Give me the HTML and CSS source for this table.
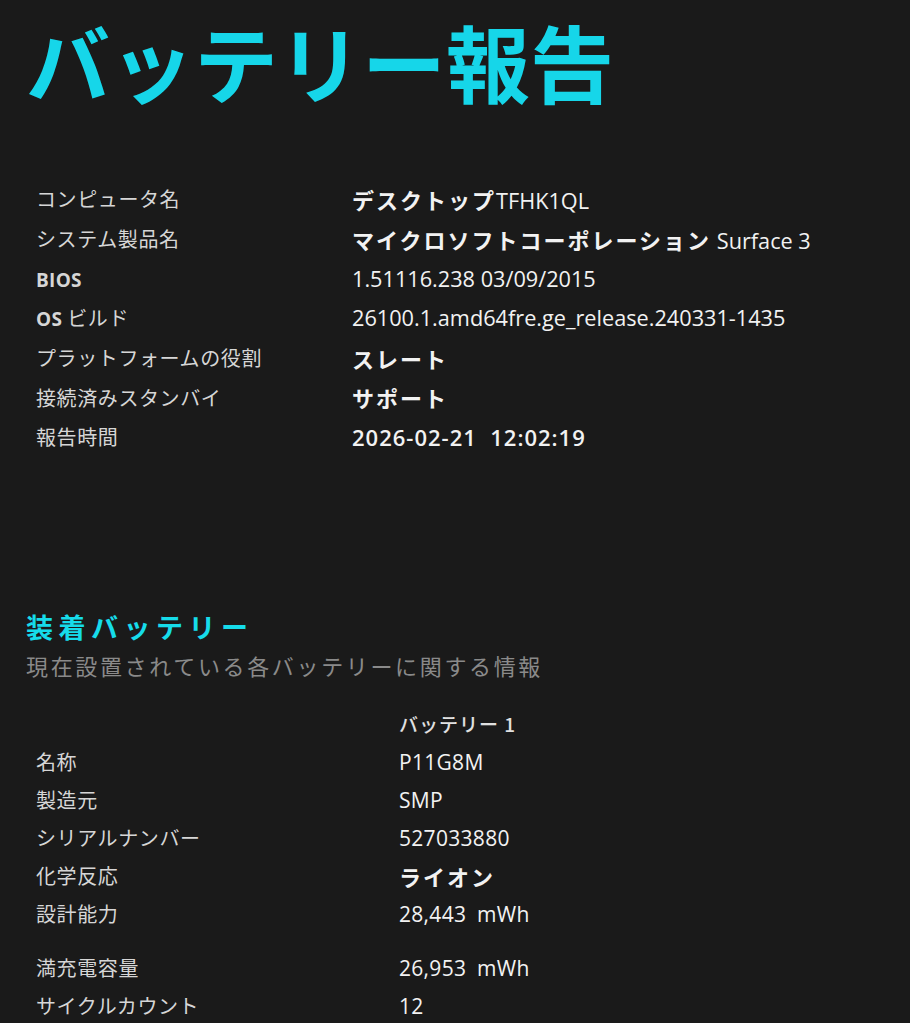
FILE: index.html
```html
<!DOCTYPE html>
<html lang="ja">
<head>
<meta charset="utf-8">
<title>バッテリー報告</title>
<link rel="stylesheet" href="styles.css">
</head>
<body>
<main class="page">
  <h1 class="title">バッテリー報告</h1>

  <table class="info">
    <tr><td class="label">コンピュータ名</td><td class="value"><span class="kana-strong">デスクトップ</span>TFHK1QL</td></tr>
    <tr><td class="label">システム製品名</td><td class="value"><span class="kana-strong">マイクロソフトコーポレーション</span> Surface 3</td></tr>
    <tr><td class="label"><span class="latin-bold">BIOS</span></td><td class="value">1.51116.238 03/09/2015</td></tr>
    <tr><td class="label"><span class="latin-bold">OS</span> ビルド</td><td class="value">26100.1.amd64fre.ge_release.240331-1435</td></tr>
    <tr><td class="label">プラットフォームの役割</td><td class="value"><span class="kana-strong">スレート</span></td></tr>
    <tr><td class="label">接続済みスタンバイ</td><td class="value"><span class="kana-strong">サポート</span></td></tr>
    <tr><td class="label">報告時間</td><td class="value"><span class="num-strong">2026-02-21&nbsp;&nbsp;12:02:19</span></td></tr>
  </table>

  <section class="batteries">
    <h2 class="section-title">装着バッテリー</h2>
    <p class="explanation">現在設置されている各バッテリーに関する情報</p>

    <table class="battery">
      <tr><td class="label"></td><td class="col-head">バッテリー 1</td></tr>
      <tr><td class="label">名称</td><td class="value">P11G8M</td></tr>
      <tr><td class="label">製造元</td><td class="value">SMP</td></tr>
      <tr><td class="label">シリアルナンバー</td><td class="value">527033880</td></tr>
      <tr><td class="label">化学反応</td><td class="value"><span class="kana-strong">ライオン</span></td></tr>
      <tr><td class="label">設計能力</td><td class="value">28,443 mWh</td></tr>
      <tr class="spacer"><td colspan="2"></td></tr>
      <tr><td class="label">満充電容量</td><td class="value">26,953 mWh</td></tr>
      <tr><td class="label">サイクルカウント</td><td class="value">12</td></tr>
    </table>
  </section>
</main>
</body>
</html>
```

FILE: styles.css
```css
html, body {
  margin: 0;
  padding: 0;
  background: #1a1a1a;
}

body {
  font-family: "Open Sans", "Noto Sans CJK JP", sans-serif;
  color: #f0f0f0;
}

.page {
  padding: 0 0 0 26px;
}

.title {
  margin: 0;
  padding-top: 0;
  font-family: "Noto Sans CJK JP", sans-serif;
  font-weight: 700;
  font-size: 84px;
  line-height: 122px;
  letter-spacing: 0;
  color: #16d6e9;
}

.info {
  margin-top: 57px;
  border-collapse: collapse;
}

.info td {
  padding: 0;
  height: 39.7px;
  vertical-align: middle;
}

.battery td {
  padding: 0;
  height: 38px;
  vertical-align: middle;
}

.label {
  padding-left: 10px !important;
  font-family: "Noto Sans CJK JP", sans-serif;
  font-size: 20px;
  letter-spacing: 0.6px;
  color: #d6d6d6;
  white-space: nowrap;
}

.info .label {
  width: 316px;
}

.latin-bold {
  font-family: "Open Sans", "Noto Sans CJK JP", sans-serif;
  font-weight: 700;
  font-size: 19px;
  letter-spacing: 0.3px;
}

.value {
  font-family: "Open Sans", "Noto Sans CJK JP", sans-serif;
  font-size: 21.7px;
  color: #f2f2f2;
  white-space: nowrap;
}

.kana-strong {
  font-family: "Noto Sans CJK JP", sans-serif;
  font-weight: 700;
  font-size: 22px;
  letter-spacing: 2px;
}

.num-strong {
  font-family: "Open Sans", "Noto Sans CJK JP", sans-serif;
  font-weight: 600;
  font-size: 22px;
  letter-spacing: 1px;
}

.batteries {
  margin-top: 152px;
}

.section-title {
  margin: 0;
  font-family: "Noto Sans CJK JP", sans-serif;
  font-weight: 700;
  font-size: 27px;
  line-height: 36px;
  letter-spacing: 5.5px;
  color: #16dcea;
}

.explanation {
  margin: 0;
  font-family: "Noto Sans CJK JP", sans-serif;
  font-size: 22px;
  line-height: 40px;
  letter-spacing: 2.65px;
  color: #8a8a8a;
}

.battery {
  margin-top: 20px;
  border-collapse: collapse;
}

.battery .label {
  width: 363px;
}

.battery .value {
  font-size: 21px;
  letter-spacing: 0.3px;
  word-spacing: 5px;
}

.col-head {
  font-family: "Noto Sans CJK JP", sans-serif;
  font-weight: 500;
  font-size: 19px;
  letter-spacing: 1px;
  color: #e0e0e0;
}

.battery .spacer td {
  height: 16px;
}
```
